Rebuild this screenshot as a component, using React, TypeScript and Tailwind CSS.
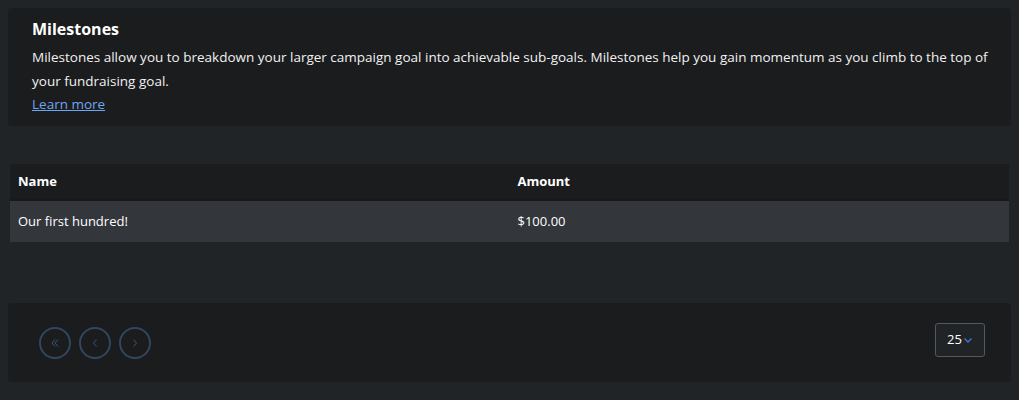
import React from "react";

const font = { fontFamily: '"Open Sans", "Noto Sans", sans-serif' };

function Circle({ children }: { children: React.ReactNode }) {
  return (
    <button className="flex h-8 w-8 items-center justify-center rounded-full border-2 border-[#32465e] text-[#3d5573]">
      {children}
    </button>
  );
}

export default function App() {
  return (
    <div className="h-[400px] w-full bg-[#212427] p-2 text-white" style={font}>
      <div className="rounded-sm bg-[#1b1c1e] pl-6 pr-4 pt-[10px] pb-[14px]">
        <h2 className="text-[16px] font-bold leading-[22px]">Milestones</h2>
        <p className="mt-[5px] text-[13.5px] leading-6 text-[#f1f1f1]">
          Milestones allow you to breakdown your larger campaign goal into achievable sub-goals. Milestones help you gain momentum as you climb to the top of your fundraising goal.
        </p>
        <a href="#" className="mt-[3px] block w-fit text-[13.5px] leading-4 text-[#6ea6f0] underline">
          Learn more
        </a>
      </div>

      <div className="mx-[2px] mt-[38px]">
        <div className="grid h-[35px] grid-cols-2 items-center bg-[#1b1c1e] text-[13px] font-bold">
          <span className="px-2">Name</span>
          <span className="px-2">Amount</span>
        </div>
        <div className="h-[2px] bg-[#18191b]" />
        <div className="grid h-[41px] grid-cols-2 items-center bg-[#33363b] text-[13px]">
          <span className="px-2">Our first hundred!</span>
          <span className="px-2">$100.00</span>
        </div>
      </div>

      <div className="mt-[61px] flex h-[79px] items-center justify-between rounded-sm bg-[#1b1c1e] pl-[31px] pr-[26px]">
        <div className="flex gap-2">
          <Circle>
            <svg width="12" height="12" viewBox="0 0 12 12" fill="none" stroke="currentColor" strokeWidth="1">
              <path d="M6 2.5 L3 6 L6 9.5 M9 2.5 L6 6 L9 9.5" />
            </svg>
          </Circle>
          <Circle>
            <svg width="12" height="12" viewBox="0 0 12 12" fill="none" stroke="currentColor" strokeWidth="1">
              <path d="M7.5 2.5 L4.5 6 L7.5 9.5" />
            </svg>
          </Circle>
          <Circle>
            <svg width="12" height="12" viewBox="0 0 12 12" fill="none" stroke="currentColor" strokeWidth="1">
              <path d="M4.5 2.5 L7.5 6 L4.5 9.5" />
            </svg>
          </Circle>
        </div>
        <div className="mb-[6px] flex h-[34px] w-[50px] items-center justify-center gap-[1px] rounded-[3px] border border-[#55595e] bg-[#212427] text-[13px]">
          <span>25</span>
          <svg width="10" height="10" viewBox="0 0 10 10" fill="none" stroke="#3b7ad8" strokeWidth="1.4">
            <path d="M1.5 3.5 L5 7 L8.5 3.5" />
          </svg>
        </div>
      </div>
    </div>
  );
}
